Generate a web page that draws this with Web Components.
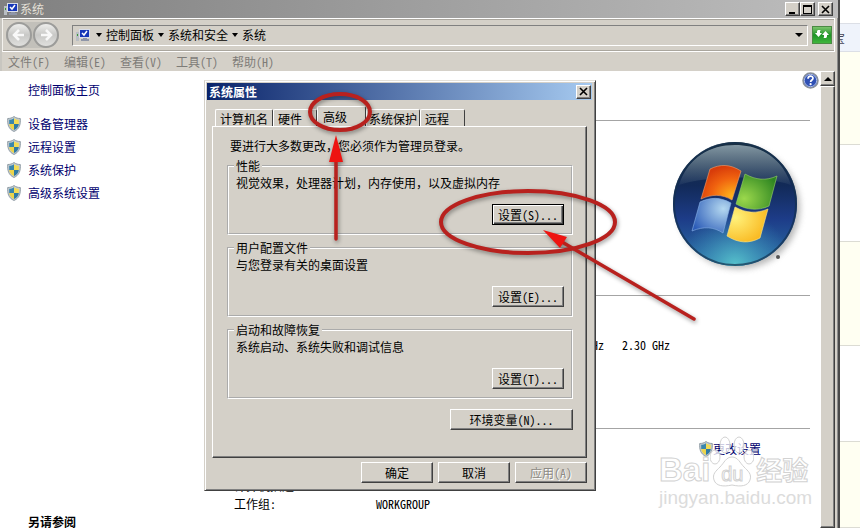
<!DOCTYPE html>
<html lang="zh-CN">
<head>
<meta charset="utf-8">
<title>系统</title>
<style>
  body {
    margin: 0;
    height: 100vh;
    overflow: hidden;
    display: grid;
    grid-template-columns: 1fr 20px;
    font: 12px/16px "Noto Sans CJK SC", "Liberation Sans", sans-serif;
    font-feature-settings: "hwid";
    color: #000;
    --face: #d4d0c8;
    --edge: #404040;
    --shade: #808080;
    --link: #00006e;
  }
  properties-dialog {
    position: absolute;
    left: 204px;
    top: 80px;
    width: 392px;
  }
  red-marks {
    position: absolute;
    inset: 0;
  }
  site-watermark {
    position: absolute;
    left: 659px;
    top: 434px;
  }
</style>
</head>
<body>
  <system-window caption="系统">
    <address-bar slot="address"></address-bar>
    <menu-row slot="menu"></menu-row>
    <side-pane slot="side">
      <a-link plain>控制面板主页</a-link>
      <a-link slot="tasks">设备管理器</a-link>
      <a-link slot="tasks">远程设置</a-link>
      <a-link slot="tasks">系统保护</a-link>
      <a-link slot="tasks">高级系统设置</a-link>
      <span slot="also">另请参阅</span>
    </side-pane>
    <system-info></system-info>
  </system-window>
  <page-strip></page-strip>

  <properties-dialog caption="系统属性">
    <span slot="note">要进行大多数更改，您必须作为管理员登录。</span>
    <group-box caption="性能" action="设置(S)..." primary>视觉效果，处理器计划，内存使用，以及虚拟内存</group-box>
    <group-box caption="用户配置文件" action="设置(E)...">与您登录有关的桌面设置</group-box>
    <group-box caption="启动和故障恢复" action="设置(T)...">系统启动、系统失败和调试信息</group-box>
    <win-button slot="extra" style="--w: 123px">环境变量(N)...</win-button>
    <win-button slot="actions">确定</win-button>
    <win-button slot="actions">取消</win-button>
    <win-button slot="actions" disabled>应用(A)</win-button>
  </properties-dialog>

  <site-watermark></site-watermark>
  <red-marks></red-marks>

<script>
const raised = `
  background: var(--face);
  border: 1px solid;
  border-color: #fff var(--edge) var(--edge) #fff;
  box-shadow: inset -1px -1px 0 var(--shade);
`;

const computerIcon = `
  <svg width="14" height="14" viewBox="0 0 14 14" aria-hidden="true">
    <rect x="0" y="4" width="3" height="9" fill="#b9bec4"/>
    <rect x="1" y="6" width="1" height="2" fill="#3a9a30"/>
    <rect x="3" y="1" width="11" height="9" fill="#d8dce8"/>
    <rect x="4" y="2" width="9" height="7" fill="#1636b8"/>
    <path d="M6 5l2 2 3-4" fill="none" stroke="#fff" stroke-width="1.5"/>
    <path d="M7 10h4v1h2v2H5v-2h2z" fill="#8f96a8"/>
  </svg>`;

class BaseElement extends HTMLElement {
  connectedCallback() {
    if (this.shadowRoot) return;
    this.attachShadow({ mode: "open" });
    this.shadowRoot.innerHTML = this.template();
  }
}

class WinButton extends BaseElement {
  template() {
    return `
      <style>
        :host { display: inline-flex; }
        button {
          ${raised}
          width: var(--w, 72px);
          height: 21px;
          padding: 0;
          font: inherit;
          font-feature-settings: inherit;
          line-height: 17px;
          color: inherit;
          white-space: nowrap;
        }
        button:disabled { color: #8c8a84; text-shadow: 1px 1px 0 #fff; }
        :host([primary]) button { border-color: #000; box-shadow: inset 1px 1px 0 #fff, inset -1px -1px 0 var(--edge), inset -2px -2px 0 var(--shade); }
      </style>
      <button type="button" ${this.hasAttribute("disabled") ? "disabled" : ""}><slot></slot></button>
    `;
  }
}

class CaptionButton extends BaseElement {
  template() {
    const glyphs = {
      min: `<path d="M2 8h6v2H2z"/>`,
      max: `<path d="M1 1h9v9H1zM2 3v6h7V3z" fill-rule="evenodd"/>`,
      close: `<path d="M2 2l7 7M9 2l-7 7" stroke="#000" stroke-width="1.6"/>`,
    };
    const kind = this.getAttribute("kind");
    return `
      <style>
        :host { display: flex; }
        button { ${raised} width: 15px; height: 14px; padding: 0; display: grid; place-items: center; }
      </style>
      <button type="button" aria-label="${kind}"><svg width="11" height="11" viewBox="0 0 11 11">${glyphs[kind]}</svg></button>
    `;
  }
}

class ShieldIcon extends BaseElement {
  template() {
    return `
      <style>:host { display: flex; }</style>
      <svg width="14" height="16" viewBox="0 0 14 16" aria-hidden="true">
        <path d="M7 .5C5 2 3 2.500 .7 2.500 .3 8.500 1.500 13 7 15.500 12.500 13 13.700 8.500 13.300 2.500 11 2.500 9 2 7 .5z" fill="#c3ccd2" stroke="#7d8c95" stroke-width=".8"/>
        <path d="M7 2.200C5.500 3.200 4 3.700 2.200 3.800V8H7z" fill="#3a86ac"/>
        <path d="M7 2.200c1.500 1 3 1.500 4.800 1.600V8H7z" fill="#f3dc55"/>
        <path d="M2.200 8c.4 2.800 1.800 4.800 4.800 6.100V8z" fill="#ecd44c"/>
        <path d="M11.800 8c-.4 2.800-1.800 4.800-4.800 6.100V8z" fill="#2f7aa4"/>
      </svg>
    `;
  }
}

class ALink extends BaseElement {
  template() {
    return `
      <style>
        :host { display: flex; align-items: center; gap: 7px; padding-left: 7px; }
        :host([plain]) { padding-left: 28px; }
        :host([tight]) { gap: 0; padding-left: 0; }
        a { color: var(--link); text-decoration: none; white-space: nowrap; }
      </style>
      ${this.hasAttribute("plain") ? "" : "<shield-icon></shield-icon>"}
      <a href="#"><slot></slot></a>
    `;
  }
}

class AddressBar extends BaseElement {
  template() {
    return `
      <style>
        :host {
          display: flex;
          align-items: center;
          gap: 12px;
          height: 32px;
          padding: 0 2px 0 3px;
          border: 1px solid;
          border-color: #fff #fff #fff #f4f2ee;
          box-shadow: inset 0 1px 0 #aaa69e, inset 0 -1px 0 #aaa69e;
        }
        .nav { display: flex; gap: 1px; background: #c2c0ba; border-radius: 14px; }
        .nav button {
          width: 26px;
          height: 26px;
          padding: 0;
          border: 2px solid #9c9c9a;
          border-radius: 50%;
          background: linear-gradient(#eeeeec, #c8c8c6 50%, #e0e0de);
          display: grid;
          place-items: center;
        }
        .field {
          flex: 1;
          display: flex;
          align-items: center;
          height: 19px;
          margin-left: 1px;
          border: 1px solid;
          border-color: #808080 #fff #fff #808080;
          padding-left: 3px;
        }
        nav { display: flex; align-items: center; gap: 4px; margin-left: 6px; }
        nav a { color: #000; text-decoration: none; }
        i { border: 3px solid transparent; border-top: 4px solid #000; border-bottom: 0; }
        .drop { margin-left: auto; padding: 0 4px; border: 0; background: none; }
        .drop i { display: block; border-width: 4px 4px 0; }
        .go {
          width: 20px;
          height: 18px;
          padding: 0;
          margin-left: -8px;
          border: 1px solid #4b8a43;
          background: linear-gradient(#7cc46c, #1f9427 50%, #3fb53c);
          display: grid;
          place-items: center;
        }
      </style>
      <div class="nav">
        <button type="button" aria-label="back"><svg width="16" height="14" viewBox="0 0 16 14"><path d="M8 2L3 7l5 5M3 7h10" fill="none" stroke="#f8f8f8" stroke-width="2.500"/></svg></button>
        <button type="button" aria-label="forward"><svg width="16" height="14" viewBox="0 0 16 14"><path d="M8 2l5 5-5 5M13 7H3" fill="none" stroke="#f8f8f8" stroke-width="2.500"/></svg></button>
      </div>
      <div class="field">
        ${computerIcon}
        <nav><i></i><a href="#">控制面板</a><i></i><a href="#">系统和安全</a><i></i><a href="#">系统</a></nav>
        <button class="drop" type="button" aria-label="history"><i></i></button>
      </div>
      <button class="go" type="button" aria-label="refresh">
        <svg width="16" height="14" viewBox="0 0 16 14" fill="#fff"><path d="M1 7l3.500-4L8 7H6v1.500c0 1 .5 1.500 1.500 1.500H5C3.500 10 3 9.500 3 8V7z" transform="matrix(1 0 0 -1 0 12)"/><path d="M15 7l-3.500-4L8 7h2v1.500c0 1-.5 1.500-1.500 1.500H11c1.500 0 2-.5 2-2V7z"/></svg>
      </button>
    `;
  }
}

class MenuRow extends BaseElement {
  template() {
    const items = ["文件(F)", "编辑(E)", "查看(V)", "工具(T)", "帮助(H)"];
    return `
      <style>
        :host { display: flex; gap: 14px; height: 19px; padding-left: 6px; }
        button { border: 0; padding: 0; background: none; font: inherit; font-feature-settings: inherit; color: #7e7c78; }
      </style>
      ${items.map((item) => `<button type="button">${item}</button>`).join("")}
    `;
  }
}

class SidePane extends BaseElement {
  template() {
    return `
      <style>
        :host { display: flex; flex-direction: column; padding-top: 11px; }
        .tasks { display: grid; grid-auto-rows: 23px; margin-top: 14px; }
        .also { margin: auto 0 -2px 28px; font-weight: bold; }
      </style>
      <slot></slot>
      <div class="tasks"><slot name="tasks"></slot></div>
      <div class="also"><slot name="also"></slot></div>
    `;
  }
}

class WindowsLogo extends BaseElement {
  template() {
    return `
      <style>:host { display: block; }</style>
      <svg width="138" height="138" viewBox="0 0 138 138" role="img" aria-label="Windows">
        <defs>
          <linearGradient id="ball" x1="0" y1="0" x2="0" y2="1">
            <stop offset="0" stop-color="#1c3040"/>
            <stop offset=".35" stop-color="#122a58"/>
            <stop offset=".62" stop-color="#1d3c88"/>
            <stop offset="1" stop-color="#2c74a8"/>
          </linearGradient>
          <radialGradient id="glow" cx=".5" cy="1" r=".45">
            <stop offset="0" stop-color="#58c4cc"/>
            <stop offset="1" stop-color="#3c90c0" stop-opacity="0"/>
          </radialGradient>
          <linearGradient id="gloss" x1="0" y1="0" x2="0" y2="1">
            <stop offset="0" stop-color="#8296a2"/>
            <stop offset="1" stop-color="#6f8698" stop-opacity=".1"/>
          </linearGradient>
          <radialGradient id="r" cx=".8" cy=".9" r=".9"><stop offset="0" stop-color="#ffb81c"/><stop offset=".6" stop-color="#f0620f"/><stop offset="1" stop-color="#d83c0a"/></radialGradient>
          <radialGradient id="g" cx=".2" cy=".7" r=".9"><stop offset="0" stop-color="#9bd84c"/><stop offset="1" stop-color="#2c8420"/></radialGradient>
          <radialGradient id="b" cx=".8" cy=".3" r=".9"><stop offset="0" stop-color="#b4d8f0"/><stop offset="1" stop-color="#2c5cb8"/></radialGradient>
          <radialGradient id="y" cx=".2" cy=".3" r="1"><stop offset="0" stop-color="#fff27c"/><stop offset="1" stop-color="#f8ac0c"/></radialGradient>
          <filter id="soft" x="-20%" y="-20%" width="140%" height="140%"><feGaussianBlur stdDeviation="3"/></filter>
        </defs>
        <circle cx="67" cy="67" r="61" fill="#8a8a8a" opacity=".6" filter="url(#soft)"/>
        <circle cx="63" cy="63" r="62" fill="url(#ball)"/>
        <circle cx="63" cy="63" r="62" fill="url(#glow)"/>
        <path d="M7 44C16 16 38 4 63 4s47 12 56 40C90 34 36 34 7 44z" fill="url(#gloss)"/>
        <circle cx="63" cy="63" r="61" fill="none" stroke="#14304e" stroke-width="2" opacity=".7"/>
        <path d="M38 28c10-5 20-5 31 2l-9 29c-10-6-20-6-31-1z" fill="url(#r)" stroke="#f6a06a" stroke-width=".6"/>
        <path d="M73 33c11 6 21 7 32 2l-8 30c-11 5-22 4-33-2z" fill="url(#g)" stroke="#9ad468" stroke-width=".6"/>
        <path d="M28 61c11-5 20-5 31 1l-8 30c-9-6-19-7-31-2z" fill="url(#b)" stroke="#8ab4e8" stroke-width=".6"/>
        <path d="M63 66c11 6 21 7 33 2l-8 29c-11 6-22 5-33-2z" fill="url(#y)" stroke="#fde88a" stroke-width=".6"/>
        <circle cx="106" cy="116" r="2" fill="#555"/>
      </svg>
    `;
  }
}

class SystemInfo extends BaseElement {
  template() {
    return `
      <style>
        :host { display: grid; grid-template-rows: 49px 175px 133px 1fr; padding: 0 10px 0 26px; }
        .help { justify-self: end; margin: 1px -9px 0 0; width: 17px; height: 17px; padding: 0; border: 0; background: none; }
        section { border-top: 1px solid #a4a4a4; }
        .brand { display: flex; justify-content: flex-end; padding-top: 20px; }
        .cpu { padding: 41px 140px 0 0; text-align: right; white-space: pre; }
        .change { display: flex; justify-content: flex-end; padding: 12px 49px 21px 0; }
        dl { display: grid; grid-template-columns: 142px 1fr; grid-auto-rows: 18px; margin: 0; padding-left: 8px; }
        dt, dd { margin: 0; }
      </style>
      <button class="help" type="button" aria-label="help">
        <svg width="17" height="17" viewBox="0 0 17 17">
          <circle cx="8.500" cy="8.500" r="7.500" fill="#2f50b4" stroke="#8a9098" stroke-width="1.500"/>
          <circle cx="8.500" cy="8.500" r="6.200" fill="none" stroke="#c8d4f0" stroke-width=".8"/>
          <path d="M6 6.800c0-3.400 5-3.400 5-.5 0 1.700-2.400 1.700-2.400 3.700" fill="none" stroke="#fff" stroke-width="1.700"/>
          <circle cx="8.600" cy="12.200" r="1.100" fill="#fff"/>
        </svg>
      </button>
      <section class="brand"><windows-logo></windows-logo></section>
      <section><div class="cpu">GHz   2.30 GHz</div></section>
      <section>
        <div class="change"><a-link tight>更改设置</a-link></div>
        <dl><dt>计算机描述:</dt><dd></dd><dt>工作组:</dt><dd>WORKGROUP</dd></dl>
      </section>
    `;
  }
}

class SystemWindow extends BaseElement {
  template() {
    return `
      <style>
        :host {
          display: grid;
          grid-template-rows: 18px auto auto 1fr;
          min-width: 0;
          height: 100vh;
          overflow: hidden;
          background: var(--face);
          border-right: 2px solid #4a4a4a;
          box-shadow: inset -1px 0 0 #8c8c8c;
          padding-right: 3px;
          box-sizing: border-box;
        }
        header {
          display: flex;
          align-items: center;
          gap: 2px;
          margin-right: -3px;
          padding: 0 5px 0 4px;
          background: linear-gradient(90deg, #808080, #bdbdbd);
          color: #e4e0d8;
        }
        header caption-button:first-of-type { margin-left: auto; }
        header caption-button { margin-right: -2px; }
        header caption-button:last-of-type { margin: 0 0 0 3px; }
        .bars { border-left: 2px solid #c8c6c0; }
        .body { display: grid; grid-template-columns: 200px 1fr 15px; min-height: 0; background: #fff; }
        .scroll { display: grid; grid-template-rows: 15px 1fr; background: var(--face); }
        .scroll button { ${raised} padding: 0; display: grid; place-items: center; }
        .scroll i { border: 4px solid transparent; border-bottom-color: #000; border-top: 0; }
        .thumb { ${raised} }
      </style>
      <header>
        ${computerIcon}<span>${this.getAttribute("caption")}</span>
        <caption-button kind="min"></caption-button>
        <caption-button kind="max"></caption-button>
        <caption-button kind="close"></caption-button>
      </header>
      <div class="bars"><slot name="address"></slot></div>
      <div class="bars"><slot name="menu"></slot></div>
      <div class="body">
        <slot name="side"></slot>
        <slot></slot>
        <div class="scroll"><button type="button" aria-label="scroll up"><i></i></button><div class="thumb"></div></div>
      </div>
    `;
  }
}

// The browser page that shows past the right edge of the window
class PageStrip extends BaseElement {
  template() {
    return `
      <style>
        :host { display: grid; grid-template-rows: 23px 29px 93px 97px 104px 96px 1fr; overflow: hidden; background: #fff; }
        .bar { display: flex; align-items: center; background: #eff3fb; border: solid #dcdfe6; border-width: 1px 0; color: #445; overflow: hidden; }
        .bar span { margin-left: -7px; }
        .cream { background: #fffff2; }
        .cream, .line { border-bottom: 1px solid #dcdcd4; }
      </style>
      <div></div>
      <div class="bar"><span>宝</span></div>
      <div class="cream"></div>
      <div class="line"></div>
      <div class="cream"></div>
      <div class="line"></div>
      <div class="cream"></div>
    `;
  }
}

class GroupBox extends BaseElement {
  template() {
    return `
      <style>
        :host { display: block; }
        fieldset {
          display: flex;
          flex-direction: column;
          box-sizing: border-box;
          height: 76px;
          margin: 0;
          padding: 2px 7px 8px;
          border: 2px groove #fff;
          min-width: 0;
        }
        legend { height: 14px; line-height: 14px; padding: 0 2px; margin-left: -2px; }
        p { margin: 0; white-space: nowrap; font-feature-settings: normal; }
        win-button { margin-top: auto; align-self: flex-end; }
      </style>
      <fieldset>
        <legend>${this.getAttribute("caption")}</legend>
        <p><slot></slot></p>
        <win-button ${this.hasAttribute("primary") ? "primary" : ""}>${this.getAttribute("action")}</win-button>
      </fieldset>
    `;
  }
}

class PropertiesDialog extends BaseElement {
  connectedCallback() {
    super.connectedCallback();
    const tabs = this.shadowRoot.querySelectorAll("[role=tab]");
    tabs.forEach((tab) => {
      tab.addEventListener("click", () => {
        tabs.forEach((t) => t.setAttribute("aria-selected", t === tab));
      });
    });
  }

  template() {
    const tabs = ["计算机名", "硬件", "高级", "系统保护", "远程"];
    return `
      <style>
        :host {
          display: block;
          box-sizing: border-box;
          padding: 2px 3px 7px 2px;
          background: var(--face);
          border: 1px solid;
          border-color: #e4e1da var(--edge) var(--edge) #d4d0c8;
          box-shadow: inset 1px 1px 0 #fff, inset -1px -1px 0 var(--shade);
        }
        header {
          display: flex;
          align-items: center;
          justify-content: space-between;
          height: 17px;
          padding: 0 1px 0 2px;
          background: linear-gradient(90deg, #0a246a, #a6caf0);
          color: #fff;
          font-weight: bold;
        }
        [role=tablist] { display: flex; align-items: flex-end; height: 20px; margin: 6px 0 0 8px; }
        [role=tab] {
          height: 17px;
          padding: 0 4px;
          border: 1px solid #fff;
          border-right-color: var(--edge);
          border-bottom: 0;
          border-radius: 2px 2px 0 0;
          background: var(--face);
          font: inherit;
          line-height: 15px;
          white-space: nowrap;
        }
        [role=tab]:nth-child(2) { padding: 0 14px 0 4px; }
        [role=tab]:nth-child(4) { padding: 0 2px; }
        [role=tab]:nth-child(5) { padding: 0 15px 0 4px; }
        [aria-selected=true] { height: 20px; padding: 0 18px 0 5px; }
        .panel {
          display: flex;
          flex-direction: column;
          margin: 0 5px 0 5px;
          padding: 11px 13px 27px 14px;
          border: 1px solid;
          border-color: #fff var(--edge) var(--edge) #fff;
          box-shadow: inset -1px -1px 0 var(--shade);
        }
        .note { margin: 0 0 5px 3px; white-space: nowrap; font-feature-settings: normal; }
        .groups { display: grid; gap: 6px; }
        .extra { display: flex; justify-content: flex-end; margin-top: 10px; }
        .actions { display: flex; justify-content: flex-end; gap: 5px; margin: 4px 5px 0 0; }
      </style>
      <header><span>${this.getAttribute("caption")}</span><caption-button kind="close"></caption-button></header>
      <div role="tablist">
        ${tabs.map((t) => `<button type="button" role="tab" aria-selected="${t === "高级"}">${t}</button>`).join("")}
      </div>
      <div class="panel" role="tabpanel">
        <div class="note"><slot name="note"></slot></div>
        <div class="groups"><slot></slot></div>
        <div class="extra"><slot name="extra"></slot></div>
      </div>
      <div class="actions"><slot name="actions"></slot></div>
    `;
  }
}

class SiteWatermark extends BaseElement {
  template() {
    return `
      <style>
        :host {
          display: grid;
          pointer-events: none;
          font-family: "Liberation Sans", "Noto Sans CJK SC", sans-serif;
          font-feature-settings: normal;
          color: rgba(255, 255, 255, .75);
          -webkit-text-stroke: 1px #d2d2d2;
        }
        .logo { display: flex; align-items: flex-end; height: 54px; font-size: 33px; line-height: 36px; font-weight: bold; }
        .paw { display: grid; justify-items: center; align-items: end; }
        .paw > * { grid-area: 1 / 1; }
        .paw span { font-size: 20px; line-height: 28px; font-weight: normal; }
        .cn { font-size: 26px; line-height: 34px; margin-left: 2px; }
        .url { font-size: 19px; line-height: 20px; -webkit-text-stroke: 0; color: #dcdcdc; }
      </style>
      <div class="logo">
        <span>Bai</span>
        <span class="paw">
          <svg width="44" height="52" viewBox="0 0 44 52" fill="#fff" fill-opacity=".75" stroke="#d2d2d2">
            <ellipse cx="5" cy="21" rx="5" ry="7"/><ellipse cx="15" cy="9" rx="5" ry="8"/>
            <ellipse cx="29" cy="9" rx="5" ry="8"/><ellipse cx="39" cy="21" rx="5" ry="7"/>
            <path d="M22 21c6 0 8 6 12 10s8 7 6 13-9 7-18 5c-9 2-16 1-18-5s2-9 6-13 6-10 12-10z"/>
          </svg>
          <span>du</span>
        </span>
        <span class="cn">经验</span>
      </div>
      <div class="url">jingyan.baidu.com</div>
    `;
  }
}

class RedMarks extends BaseElement {
  template() {
    return `
      <style>
        :host { display: block; pointer-events: none; }
        svg { display: block; filter: drop-shadow(1px 2px 2px rgba(0, 0, 0, .4)); }
      </style>
      <svg width="860" height="528" fill="none" stroke="#b8211e" stroke-width="4" stroke-linecap="round">
        <ellipse cx="340" cy="112" rx="30" ry="18"/>
        <ellipse cx="528" cy="222" rx="87" ry="31"/>
        <path d="M336 239V160M694 319L562 242" stroke-width="3.500"/>
        <path d="M336 135l7 27h-14zM543 230l24 7-7 11z" fill="#ee1411" stroke="none"/>
      </svg>
    `;
  }
}

customElements.define("win-button", WinButton);
customElements.define("caption-button", CaptionButton);
customElements.define("shield-icon", ShieldIcon);
customElements.define("a-link", ALink);
customElements.define("address-bar", AddressBar);
customElements.define("menu-row", MenuRow);
customElements.define("side-pane", SidePane);
customElements.define("windows-logo", WindowsLogo);
customElements.define("system-info", SystemInfo);
customElements.define("system-window", SystemWindow);
customElements.define("page-strip", PageStrip);
customElements.define("group-box", GroupBox);
customElements.define("properties-dialog", PropertiesDialog);
customElements.define("site-watermark", SiteWatermark);
customElements.define("red-marks", RedMarks);
</script>
</body>
</html>
